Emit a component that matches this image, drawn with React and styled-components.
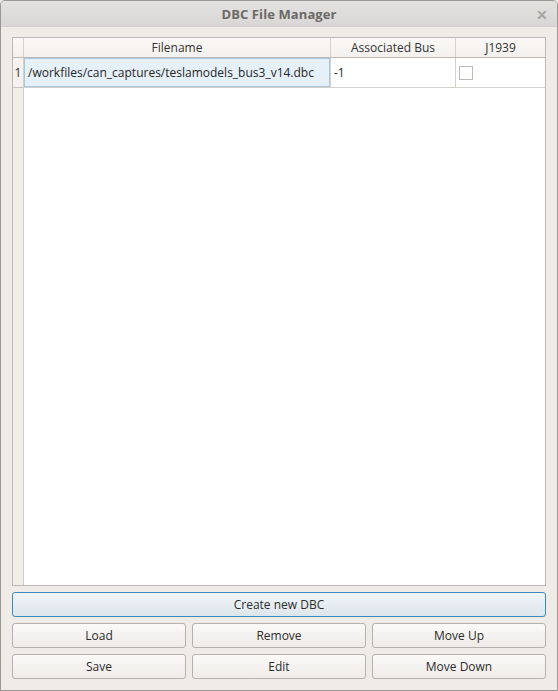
import React from "react";
import styled, { createGlobalStyle } from "styled-components";

const Global = createGlobalStyle`
  html, body { margin: 0; padding: 0; background: #efebe7; }
  body { font-family: "Open Sans", "Noto Sans", sans-serif; font-size: 12px; color: #2f2f2f; }
`;

const Window = styled.div`
  width: 558px;
  height: 691px;
  box-sizing: border-box;
  border: 1px solid #9a9794;
  border-radius: 5px 5px 0 0;
  background: #efebe7;
  display: flex;
  flex-direction: column;
  overflow: hidden;
`;

const TitleBar = styled.div`
  height: 25px;
  flex: none;
  display: flex;
  align-items: center;
  justify-content: center;
  position: relative;
  background: linear-gradient(#e4e2e0, #d9d7d5);
  border-bottom: 1px solid #d2cfcc;
`;

const Title = styled.div`
  font-weight: bold;
  font-size: 13px;
  color: #6b6967;
  letter-spacing: 0.1px;
`;

const Close = styled.div`
  position: absolute;
  right: 9px;
  top: 4px;
  font-size: 14px;
  font-weight: bold;
  color: #a8a6a4;
`;

const Body = styled.div`
  flex: 1;
  display: flex;
  flex-direction: column;
  padding: 10px 11px 11px 11px;
  gap: 6px;
`;

const Table = styled.div`
  height: 549px;
  flex: none;
  box-sizing: border-box;
  border: 1px solid #bcb8b4;
  background: #ffffff;
  display: flex;
  flex-direction: column;
`;

const cols = "11px 307px 125px 89px";

const HeaderRow = styled.div`
  display: grid;
  grid-template-columns: ${cols};
  height: 19px;
  background: linear-gradient(#fbf9f7, #f3f0ed);
  border-bottom: 1px solid #bdb9b5;
`;

const HeaderCell = styled.div`
  display: flex;
  align-items: center;
  justify-content: center;
  color: #333;
  border-right: ${(p) => (p.last ? "none" : "1px solid #d4d0cc")};
  line-height: 1;
`;

const DataArea = styled.div`
  flex: 1;
  display: grid;
  grid-template-columns: 11px 1fr;
`;

const RowHeaderStrip = styled.div`
  background: #f1eeea;
  border-right: 1px solid #d4d0cc;
  display: flex;
  flex-direction: column;
`;

const RowNum = styled.div`
  height: 29px;
  border-bottom: 1px solid #c8c4c0;
  display: flex;
  align-items: center;
  justify-content: center;
  color: #333;
  background: #f4f1ee;
`;

const Rows = styled.div`
  display: flex;
  flex-direction: column;
`;

const Row = styled.div`
  display: grid;
  grid-template-columns: 307px 125px 89px;
  height: 29px;
  border-bottom: 1px solid #d4d0cc;
`;

const Cell = styled.div`
  display: flex;
  align-items: center;
  padding-left: ${(p) => (p.selected ? "4px" : "3px")};
  box-sizing: border-box;
  border-right: ${(p) => (p.last ? "none" : "1px solid #d4d0cc")};
  background: ${(p) => (p.selected ? "#e5f0f9" : "#fff")};
  box-shadow: ${(p) => (p.selected ? "inset 0 0 0 1px #a9c7df" : "none")};
  color: #262626;
  white-space: nowrap;
`;

const Check = styled.div`
  width: 12px;
  height: 12px;
  border: 1px solid #bbb7b3;
  background: #fff;
  margin-top: 0px;
`;

const Button = styled.div`
  height: 25px;
  box-sizing: border-box;
  border: 1px solid ${(p) => (p.primary ? "#3f88bd" : "#b5b1ad")};
  border-radius: 3px;
  background: ${(p) =>
    p.primary
      ? "linear-gradient(#f0f5f8, #dde6ec)"
      : "linear-gradient(#fbfaf9, #eeebe8)"};
  display: flex;
  align-items: center;
  justify-content: center;
  color: #2c2c2c;
`;

const ButtonGrid = styled.div`
  display: grid;
  grid-template-columns: repeat(3, 1fr);
  gap: 6px 6px;
`;

export default function App() {
  return (
    <>
      <Global />
      <Window>
        <TitleBar>
          <Title>DBC File Manager</Title>
          <Close>✕</Close>
        </TitleBar>
        <Body>
          <Table>
            <HeaderRow>
              <HeaderCell />
              <HeaderCell>Filename</HeaderCell>
              <HeaderCell>Associated Bus</HeaderCell>
              <HeaderCell last>J1939</HeaderCell>
            </HeaderRow>
            <DataArea>
              <RowHeaderStrip>
                <RowNum>1</RowNum>
              </RowHeaderStrip>
              <Rows>
                <Row>
                  <Cell selected>/workfiles/can_captures/teslamodels_bus3_v14.dbc</Cell>
                  <Cell>-1</Cell>
                  <Cell last>
                    <Check />
                  </Cell>
                </Row>
              </Rows>
            </DataArea>
          </Table>
          <Button primary>Create new DBC</Button>
          <ButtonGrid>
            <Button>Load</Button>
            <Button>Remove</Button>
            <Button>Move Up</Button>
            <Button>Save</Button>
            <Button>Edit</Button>
            <Button>Move Down</Button>
          </ButtonGrid>
        </Body>
      </Window>
    </>
  );
}
